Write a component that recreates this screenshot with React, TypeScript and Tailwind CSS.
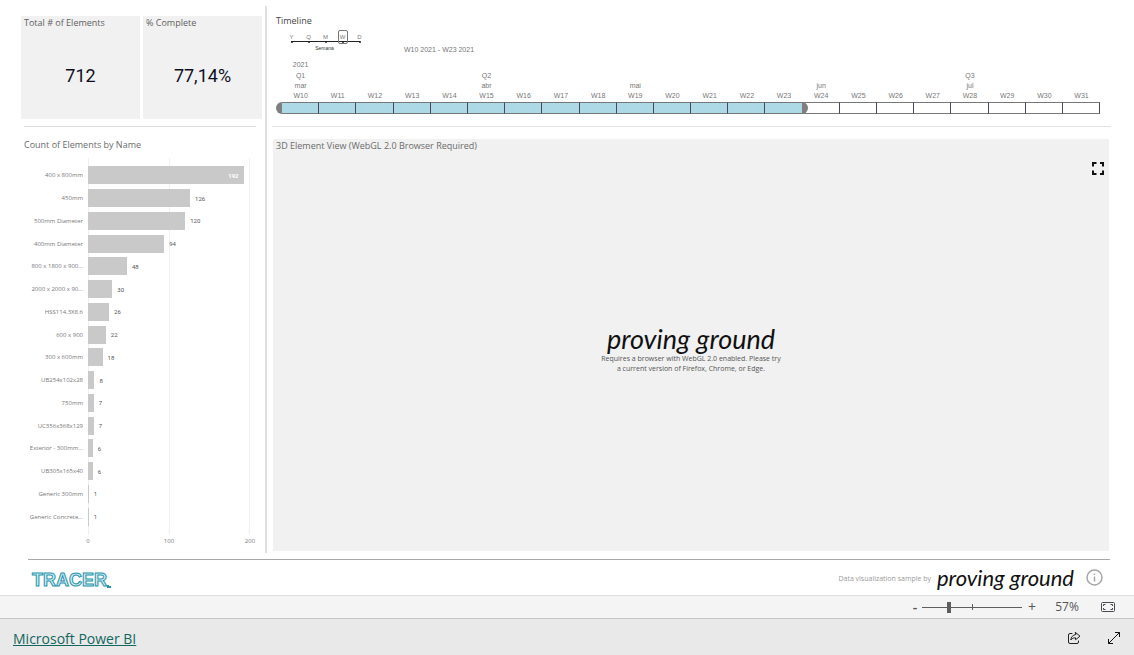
import React, { useState } from 'react'
import clsx from 'clsx'

interface Bar {
  name: string
  count: number
}

interface Week {
  week: string
  year?: string
  quarter?: string
  month?: string
}

const bars: Bar[] = [
  { name: '400 x 800mm', count: 192 },
  { name: '450mm', count: 126 },
  { name: '500mm Diameter', count: 120 },
  { name: '400mm Diameter', count: 94 },
  { name: '800 x 1800 x 900...', count: 48 },
  { name: '2000 x 2000 x 90...', count: 30 },
  { name: 'HSS114.3X8.6', count: 26 },
  { name: '600 x 900', count: 22 },
  { name: '300 x 600mm', count: 18 },
  { name: 'UB254x102x28', count: 8 },
  { name: '750mm', count: 7 },
  { name: 'UC356x368x129', count: 7 },
  { name: 'Exterior - 300mm...', count: 6 },
  { name: 'UB305x165x40', count: 6 },
  { name: 'Generic 300mm', count: 1 },
  { name: 'Generic Concrete...', count: 1 },
]

const AXIS_MAX = 200

const weeks: Week[] = [
  { week: 'W10', year: '2021', quarter: 'Q1', month: 'mar' },
  { week: 'W11' },
  { week: 'W12' },
  { week: 'W13' },
  { week: 'W14' },
  { week: 'W15', quarter: 'Q2', month: 'abr' },
  { week: 'W16' },
  { week: 'W17' },
  { week: 'W18' },
  { week: 'W19', month: 'mai' },
  { week: 'W20' },
  { week: 'W21' },
  { week: 'W22' },
  { week: 'W23' },
  { week: 'W24', month: 'jun' },
  { week: 'W25' },
  { week: 'W26' },
  { week: 'W27' },
  { week: 'W28', quarter: 'Q3', month: 'jul' },
  { week: 'W29' },
  { week: 'W30' },
  { week: 'W31' },
]

const SELECTED_WEEKS = 14

const granularities = ['Y', 'Q', 'M', 'W', 'D']

function Card({ title, value }: { title: string; value: string }) {
  return (
    <div className="flex flex-1 flex-col bg-[#f1f1f1] px-[3px]">
      <h2 className="pt-px text-[9px] leading-3 text-[#5f5f5f]">{title}</h2>
      <p className="pt-9 pb-8 text-center font-['Roboto',sans-serif] text-[18px] leading-[22px] text-[#0e0e22]">{value}</p>
    </div>
  )
}

function BarChart() {
  return (
    <section className="flex flex-1 flex-col pl-[3px] pr-3">
      <h2 className="text-[9px] leading-3 text-[#6b6b6b]">Count of Elements by Name</h2>
      <div className="relative mt-[7px] flex flex-1 flex-col pt-[6px] pb-[7px]">
        {/* Grid lines sit behind the bars */}
        <div className="absolute inset-y-0 right-0 left-16 flex justify-between">
          <span className="w-px bg-[#f0f0f0]" />
          <span className="w-px bg-[#f0f0f0]" />
          <span className="w-px bg-[#f0f0f0]" />
        </div>
        {bars.map(({ name, count }) => {
          const inside = count > 150
          return (
            <div key={name} className="relative flex flex-1 items-center">
              <span className="w-16 pr-[5px] text-right text-[6px] leading-2 whitespace-nowrap text-[#777]">{name}</span>
              <div className="flex flex-1 items-center">
                <div
                  className="flex h-[18px] items-center justify-end bg-[#c9c9c9]"
                  style={{ width: `${(count / AXIS_MAX) * 100}%` }}
                >
                  {inside && <span className="pr-[5px] font-['Roboto',sans-serif] text-[6px] font-bold text-white">{count}</span>}
                </div>
                {!inside && <span className="pl-[5px] font-['Roboto',sans-serif] text-[6px] text-[#555]">{count}</span>}
              </div>
            </div>
          )
        })}
      </div>
      <div className="-mr-2 ml-14 flex justify-between pt-[2px] text-[6px] leading-2 text-[#777]">
        <span className="w-4 text-center">0</span>
        <span className="w-4 text-center">100</span>
        <span className="w-4 text-center">200</span>
      </div>
    </section>
  )
}

function Timeline() {
  const [granularity, setGranularity] = useState('W')

  return (
    <section className="pr-[11px] pl-1 font-['Liberation_Sans',Arial,sans-serif] text-[#777]">
      <h2 className="font-['Open_Sans','Noto_Sans',sans-serif] text-[9px] leading-3 text-[#444]">Timeline</h2>
      <div className="flex items-start gap-9 pt-[3px]">
        <div className="ml-[7px] w-[85px]">
          <div className="relative flex">
            <span className="absolute right-2 bottom-[2px] left-2 h-px bg-[#222]" />
            {granularities.map(g => (
              <button key={g} onClick={() => setGranularity(g)} className="flex flex-1 flex-col items-center">
                <span
                  className={clsx(
                    'relative flex h-[14px] w-[10px] flex-col items-center rounded-[2px] border pt-[3px] text-[6px] leading-[6px]',
                    g === granularity ? 'border-[#777]' : 'border-transparent',
                  )}
                >
                  {g}
                  <span className="mt-px h-[3px] w-[2px] rounded-full bg-[#222]" />
                </span>
              </button>
            ))}
          </div>
          <div className="pr-[2px] text-center text-[5px] leading-2 text-[#333]">Semana</div>
        </div>
        <p className="pt-4 text-[7px] leading-2">W10 2021 - W23 2021</p>
      </div>
      <div className="flex pt-[6px] pb-3">
        <span className="h-3 w-[6px] self-end rounded-l-full bg-[#7f7f7f]" />
        <div className="flex flex-1">
          {weeks.map(({ week, year, quarter, month }, i) => (
            <div key={week} className="min-w-0 flex-1 text-center text-[7px] leading-[10px]">
              <div className="h-[11px]">{year}</div>
              <div className="h-[10px]">{quarter}</div>
              <div className="h-[10px]">{month}</div>
              <div className="h-[11px]">{week}</div>
              <div
                className={clsx(
                  'relative h-3 border-y border-r border-y-[#777] border-r-[#4a4858]',
                  i < SELECTED_WEEKS ? 'bg-[#add8e6]' : 'bg-white',
                )}
              >
                {i === SELECTED_WEEKS - 1 && (
                  <span className="absolute -top-px -right-[6px] z-10 h-3 w-[6px] rounded-r-full bg-[#7f7f7f]" />
                )}
              </div>
            </div>
          ))}
        </div>
      </div>
    </section>
  )
}

function ElementView() {
  return (
    <section className="mr-[2px] ml-px flex flex-1 flex-col bg-[#f1f1f1] px-[3px]">
      <h2 className="pt-px text-[9px] leading-3 text-[#6b6b6b]">3D Element View (WebGL 2.0 Browser Required)</h2>
      <button className="mt-[10px] mr-[2px] self-end" aria-label="Full screen">
        <svg width="12" height="13" viewBox="0 0 12 13" fill="none" stroke="#111" strokeWidth="2">
          <path d="M1 4.5V1h3.500M8 1h3v3.500M11 8.500V12H8M4.500 12H1V8.500" />
        </svg>
      </button>
      <div className="flex flex-1 flex-col items-center justify-center pb-7 text-center">
        <p className="font-['Lato',sans-serif] text-[27px] leading-[30px] text-[#111] italic">proving ground</p>
        <p className="text-[7px] leading-[10px] text-[#555]">
          Requires a browser with WebGL 2.0 enabled. Please try
          <br />
          a current version of Firefox, Chrome, or Edge.
        </p>
      </div>
    </section>
  )
}

function ZoomBar() {
  const [zoom, setZoom] = useState(57)

  return (
    <div className="flex h-6 items-center justify-end border-y border-t-[#dedede] border-b-[#c6c6c6] bg-[#f4f4f4] pr-[19px] text-[#555]">
      <button className="w-3 text-sm leading-4 font-semibold" onClick={() => setZoom(z => Math.max(10, z - 10))}>-</button>
      <div className="relative flex h-4 w-[102px] items-center">
        <span className="absolute inset-x-px h-px bg-[#605e5c]" />
        <span className="absolute left-1/2 h-[6px] w-px bg-[#605e5c]" />
        <input
          type="range"
          aria-label="Zoom"
          min={10}
          max={190}
          value={zoom}
          onChange={e => setZoom(Number(e.target.value))}
          className="relative h-4 w-full appearance-none bg-transparent [&::-webkit-slider-thumb]:h-[11px] [&::-webkit-slider-thumb]:w-1 [&::-webkit-slider-thumb]:appearance-none [&::-webkit-slider-thumb]:bg-[#605e5c]"
        />
      </div>
      <button className="w-[18px] text-sm leading-4" onClick={() => setZoom(z => Math.min(190, z + 10))}>+</button>
      <span className="w-[52px] text-center text-[12px] leading-4">{zoom}%</span>
      <button className="ml-2" aria-label="Fit to page">
        <svg width="14" height="10" viewBox="0 0 14 10" fill="none" stroke="#4a4852">
          <rect x="0.500" y="0.500" width="13" height="9" rx="1" />
          <path d="M2.500 4V2.500h2M9.500 2.500h2V4M11.500 6v1.500h-2M4.500 7.500h-2V6" />
        </svg>
      </button>
    </div>
  )
}

export default function App() {
  return (
    <div className="flex min-h-screen flex-col bg-white font-['Open_Sans','Noto_Sans',sans-serif]">
      <main className="flex flex-1 gap-[3px] pt-[6px] pr-[23px] pl-[21px]">
        <div className="flex w-[241px] flex-col pt-[10px]">
          <div className="flex gap-[3px]">
            <Card title="Total # of Elements" value="712" />
            <Card title="% Complete" value="77,14%" />
          </div>
          <hr className="mt-[7px] mr-[6px] mb-3 ml-[3px] border-[#dcdcdc]" />
          <BarChart />
          <div className="h-2" />
        </div>
        <div className="w-[2px] bg-[#dfdfdf]" />
        <div className="ml-[2px] flex min-w-0 flex-1 flex-col pt-[9px] pb-[2px]">
          <Timeline />
          <hr className="mb-3 border-[#e2e2e2]" />
          <ElementView />
        </div>
      </main>

      <footer className="mt-[6px] mr-6 ml-7 flex h-9 items-center border-t border-[#a8a8a8]">
        <div className="flex items-end pt-1 pl-1 text-[#2593ad]">
          <span className="font-['Liberation_Sans',Arial,sans-serif] text-[18px] leading-5 font-bold text-[#d5edf2] [-webkit-text-stroke:1px_#2593ad]">
            TRACER
          </span>
          <svg width="4" height="6" viewBox="0 0 4 6" fill="currentColor">
            <path d="M0 1h2v1h2v2H0z" />
          </svg>
        </div>
        <div className="ml-auto flex items-center">
          <span className="pt-1 text-[7px] text-[#9a9a9a]">Data visualization sample by</span>
          <span className="pl-[6px] font-['Lato',sans-serif] text-[22px] leading-7 text-[#111] italic">proving ground</span>
          <button className="mr-[7px] ml-3" aria-label="Information">
            <svg width="17" height="17" viewBox="0 0 17 17" fill="none" stroke="#a6a6a6" strokeWidth="1.500">
              <circle cx="8.500" cy="8.500" r="7.500" />
              <path d="M8.500 7.500v5M8.500 4.500v1.500" />
            </svg>
          </button>
        </div>
      </footer>

      <ZoomBar />

      <div className="flex h-9 items-center bg-[#e9e9e9] pr-[13px] pl-[13px]">
        <a href="#" className="pt-1 text-sm leading-5 text-[#11675f] underline">Microsoft Power BI</a>
        <div className="ml-auto flex items-center gap-[26px] pt-[2px]">
          <button aria-label="Share">
            <svg width="14" height="14" viewBox="0 0 14 14" fill="none" stroke="#222" strokeLinejoin="round" strokeLinecap="round">
              <path d="M5 2.500H3A1.500 1.500 0 0 0 1.500 4v7A1.500 1.500 0 0 0 3 12.500h7a1.500 1.500 0 0 0 1.500-1.500v-1" />
              <path d="M8.500 1.500l4.500 3.700-4.500 3.600V6.800C6.500 6.700 5 7.500 3.800 9c.2-3 2-5 4.700-5.400z" />
            </svg>
          </button>
          <button aria-label="Open full screen">
            <svg width="14" height="14" viewBox="0 0 14 14" fill="none" stroke="#111">
              <path d="M1.500 12.500l11-11M8 1.500h4.500V6M6 12.500H1.500V8" />
            </svg>
          </button>
        </div>
      </div>
    </div>
  )
}
